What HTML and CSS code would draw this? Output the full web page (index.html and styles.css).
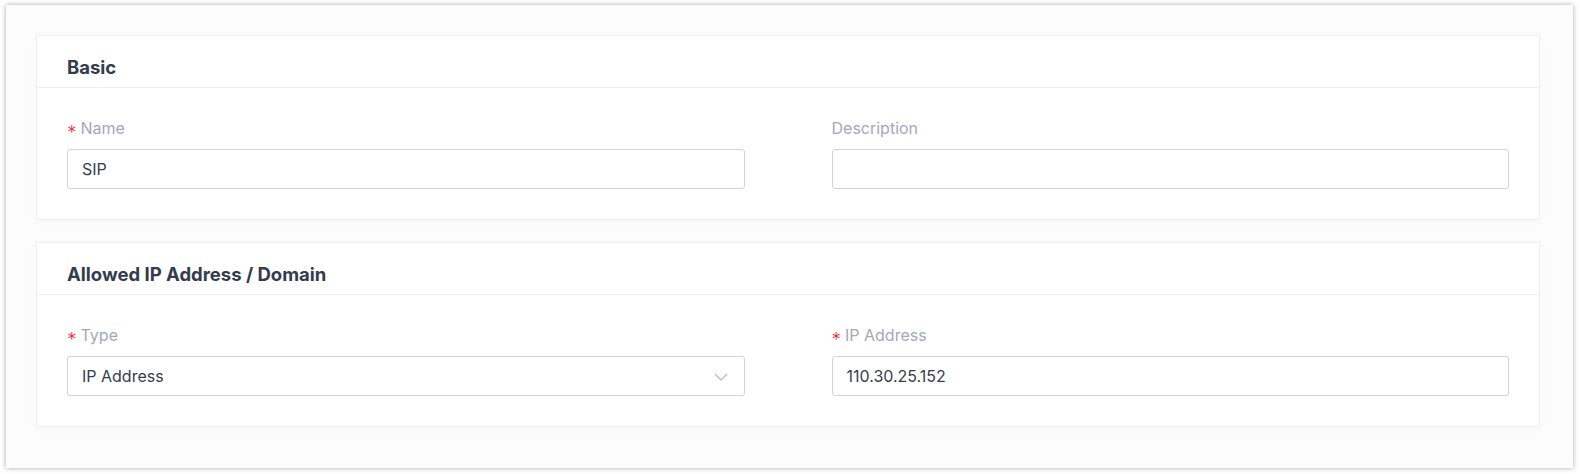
FILE: index.html
```html
<!DOCTYPE html>
<html lang="en">
<head>
  <meta charset="UTF-8" />
  <meta name="viewport" content="width=device-width, initial-scale=1.0" />
  <title>Trunk Settings</title>
  <link rel="stylesheet" href="styles.css">
</head>
<body>
  <div class="frame">

    <!-- Basic section -->
    <div class="card">
      <div class="card-header">Basic</div>
      <div class="card-body">
        <div class="field">
          <label class="label"><span class="req">*</span>Name</label>
          <div class="input">SIP</div>
        </div>
        <div class="field">
          <label class="label">Description</label>
          <div class="input"></div>
        </div>
      </div>
    </div>

    <!-- Allowed IP section -->
    <div class="card">
      <div class="card-header">Allowed IP Address / Domain</div>
      <div class="card-body">
        <div class="field">
          <label class="label"><span class="req">*</span>Type</label>
          <div class="input select">
            IP Address
            <svg class="arrow" width="14" height="8" viewBox="0 0 14 8">
              <path d="M1 1 L7 7 L13 1" fill="none" stroke="#b4b6c2" stroke-width="1.2" />
            </svg>
          </div>
        </div>
        <div class="field">
          <label class="label"><span class="req">*</span>IP Address</label>
          <div class="input">110.30.25.152</div>
        </div>
      </div>
    </div>

  </div>
</body>
</html>
```
FILE: styles.css
```css
body {
  margin: 0;
  background: #ffffff;
  font-family: Inter, Roboto, "Liberation Sans", Arial, sans-serif;
}
.frame {
  margin: 5px 7px 6px 6px;
  height: 463px;
  box-sizing: border-box;
  padding: 30px 33px 0 30px;
  background: #fcfcfd;
  box-shadow: 0 0 5px rgba(0, 0, 0, 0.35);
}
.card {
  background: #ffffff;
  border: 1px solid #eeeff4;
  box-shadow: 0 2px 8px rgba(30, 40, 80, 0.03);
  margin-bottom: 22px;
}
.card-header {
  height: 52px;
  box-sizing: border-box;
  padding: 19px 30px 0;
  line-height: 24px;
  border-bottom: 1px solid #eeeff4;
  font-size: 18.5px;
  font-weight: 700;
  color: #343b4c;
}
.card-body {
  display: grid;
  grid-template-columns: 1fr 1fr;
  column-gap: 87px;
  padding: 30px 30px 30px;
}
.label {
  display: block;
  height: 20px;
  line-height: 20px;
  font-size: 16px;
  color: #a4a8ba;
  margin-bottom: 11px;
}
.req {
  color: #ee2f45;
  font-weight: 300;
  font-size: 19px;
  line-height: 0;
  vertical-align: -5px;
  margin-right: 4px;
}
.input {
  position: relative;
  height: 40px;
  line-height: 38px;
  box-sizing: border-box;
  border: 1px solid #d3d3de;
  border-radius: 3px;
  padding: 0 14px;
  font-size: 16px;
  color: #363c4c;
}
.arrow {
  position: absolute;
  right: 16px;
  top: 16px;
}
```
